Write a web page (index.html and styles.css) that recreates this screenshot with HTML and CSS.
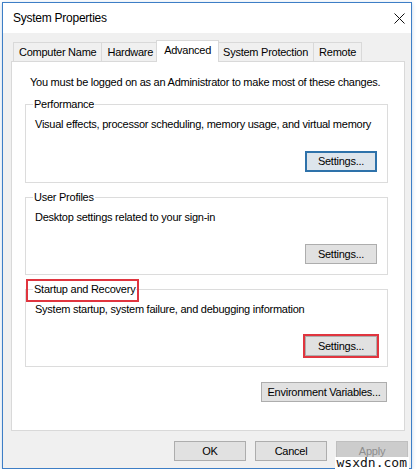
FILE: index.html
```html
<!DOCTYPE html>
<html lang="en">
<head>
<meta charset="utf-8">
<title>System Properties</title>
<link rel="stylesheet" href="styles.css">
</head>
<body>
<div class="window">
  <div class="titlebar">
    <span class="title">System Properties</span>
    <svg class="close" width="11" height="11" viewBox="0 0 11 11" aria-label="Close">
      <path d="M0.5 0.5 L10.5 10.5 M10.5 0.5 L0.5 10.5" stroke="#111" stroke-width="1" fill="none"/>
    </svg>
  </div>
  <div class="client">
    <div class="tabs">
      <div class="tab">Computer Name</div>
      <div class="tab">Hardware</div>
      <div class="tab active">Advanced</div>
      <div class="tab">System Protection</div>
      <div class="tab">Remote</div>
    </div>
    <div class="panel">
      <p class="note">You must be logged on as an Administrator to make most of these changes.</p>

      <fieldset class="group">
        <legend>Performance</legend>
        <p class="desc">Visual effects, processor scheduling, memory usage, and virtual memory</p>
        <div class="actions"><button class="btn btn-settings focused">Settings...</button></div>
      </fieldset>

      <fieldset class="group">
        <legend>User Profiles</legend>
        <p class="desc">Desktop settings related to your sign-in</p>
        <div class="actions"><button class="btn btn-settings">Settings...</button></div>
      </fieldset>

      <fieldset class="group">
        <legend class="marked">Startup and Recovery</legend>
        <p class="desc">System startup, system failure, and debugging information</p>
        <div class="actions"><button class="btn btn-settings marked">Settings...</button></div>
      </fieldset>

      <div class="env-row"><button class="btn btn-env">Environment Variables...</button></div>
    </div>
    <div class="dialog-buttons">
      <button class="btn btn-dialog">OK</button>
      <button class="btn btn-dialog">Cancel</button>
      <button class="btn btn-dialog" disabled>Apply</button>
    </div>
  </div>
  <span class="watermark">wsxdn.com</span>
</div>
</body>
</html>
```

FILE: styles.css
```css
* { box-sizing: border-box; }

html, body { margin: 0; }

body {
  background: #fff;
  color: #000;
  font: 11px/15px "Liberation Sans", Arial, sans-serif;
  letter-spacing: -0.25px;
}

/* dialog frame */
.window {
  position: relative;
  margin: 2px 0 0 2px;
  width: 410px;
  height: 467px;
  border: 1px solid #3d7ec6;
  background: #f0f0f0;
  display: flex;
  flex-direction: column;
  box-shadow: 0 1px 4px rgba(70, 120, 180, 0.35);
}

.titlebar {
  height: 30px;
  flex: none;
  background: #fff;
  display: flex;
  align-items: center;
  justify-content: space-between;
  padding: 0 6px 0 10px;
  font-size: 12px;
}

.close { display: block; }

.client {
  flex: 1;
  display: flex;
  flex-direction: column;
  padding: 7px 5px 0 8px;
}

/* tab strip */
.tabs {
  display: flex;
  align-items: flex-end;
  height: 21px;
  padding-left: 2px;
}

.tab {
  height: 19px;
  line-height: 18px;
  padding: 0 5px;
  border: 1px solid #d9d9d9;
  border-bottom: none;
  background: #f0f0f0;
  margin-left: -1px;
  white-space: nowrap;
}

.tab:first-child { margin-left: 0; }

.tab.active {
  position: relative;
  z-index: 1;
  height: 22px;
  line-height: 19px;
  margin: 0 -2px -1px -3px;
  padding: 0 7px;
  background: #fff;
}

.tab.active + .tab { margin-left: 0; }

/* page body */
.panel {
  width: 394px;
  height: 370px;
  flex: none;
  background: #fff;
  border: 1px solid #d9d9d9;
  padding: 13px 16px 0 13px;
}

.note {
  margin: 0;
  padding-left: 5px;
  white-space: nowrap;
}

.group {
  margin: 7px 0 0;
  min-width: 0;
  border: 1px solid #dcdcdc;
  padding: 0 10px 10px 9px;
}

.group legend {
  padding: 0 1px;
  margin-left: -2px;
  line-height: 15px;
}

.desc {
  margin: 5px 0 0;
  white-space: nowrap;
}

.actions {
  display: flex;
  justify-content: flex-end;
  margin-top: 19px;
}

.env-row {
  display: flex;
  justify-content: flex-end;
  margin-top: 15px;
  padding-right: 1px;
}

/* push buttons */
.btn {
  font: inherit;
  letter-spacing: inherit;
  color: #000;
  height: 20px;
  padding: 0;
  border: 1px solid #adadad;
  background: #e1e1e1;
}

.btn-settings { width: 72px; }
.btn-env { width: 126px; }

.btn.focused {
  border: 2px solid #2e72aa;
  background: #dde5ec;
  height: 21px;
}

.btn:disabled {
  background: #cccccc;
  border-color: #bfbfbf;
  color: #8d8d8d;
}

.dialog-buttons {
  display: flex;
  justify-content: flex-end;
  gap: 9px;
  margin: 10px -2px 0 0;
}

.btn-dialog { width: 72px; }

/* red callouts */
.marked { position: relative; }

.marked::after {
  content: "";
  position: absolute;
  border: 2px solid #e0353f;
  pointer-events: none;
}

legend.marked::after { inset: -3px -3px -5px -7px; }
.btn.marked::after { inset: -3px; }

.watermark {
  position: absolute;
  right: 2px;
  bottom: -1px;
  padding: 0 2px;
  background: #fff;
  font: 13px/12px "DejaVu Sans Mono", monospace;
  letter-spacing: 0;
  color: #111;
}
```
